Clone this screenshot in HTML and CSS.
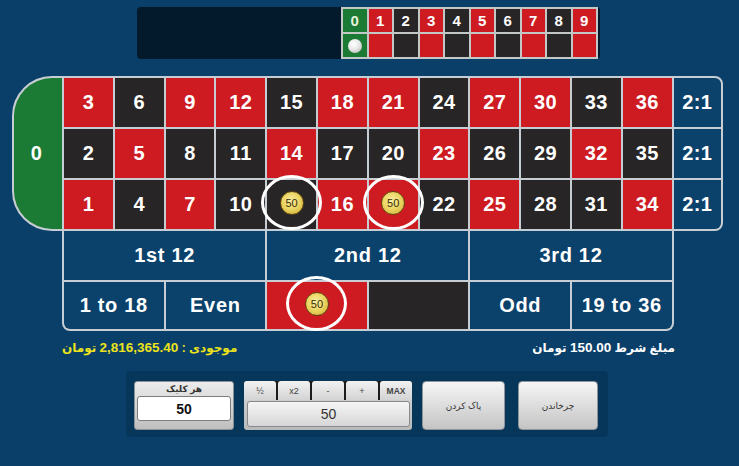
FILE: index.html
```html
<!DOCTYPE html>
<html lang="fa">
<head>
<meta charset="utf-8">
<title>Roulette</title>
<link rel="stylesheet" href="styles.css">
</head>
<body>
<div class="page">
  <div class="history">
    <div class="hist-grid">
      <div class="h green">0</div><div class="h red">1</div><div class="h black">2</div><div class="h red">3</div><div class="h black">4</div><div class="h red">5</div><div class="h black">6</div><div class="h red">7</div><div class="h black">8</div><div class="h red">9</div>
      <div class="h green"><span class="ball"></span></div><div class="h red"></div><div class="h black"></div><div class="h red"></div><div class="h black"></div><div class="h red"></div><div class="h black"></div><div class="h red"></div><div class="h black"></div><div class="h red"></div>
    </div>
  </div>

  <div class="table">
    <div class="inside">
      <div class="cell zero">0</div>
      <div class="cell red">3</div><div class="cell black">6</div><div class="cell red">9</div><div class="cell red">12</div><div class="cell black">15</div><div class="cell red">18</div><div class="cell red">21</div><div class="cell black">24</div><div class="cell red">27</div><div class="cell red">30</div><div class="cell black">33</div><div class="cell red">36</div><div class="cell col col-top">2:1</div>
      <div class="cell black">2</div><div class="cell red">5</div><div class="cell black">8</div><div class="cell black">11</div><div class="cell red">14</div><div class="cell black">17</div><div class="cell black">20</div><div class="cell red">23</div><div class="cell black">26</div><div class="cell black">29</div><div class="cell red">32</div><div class="cell black">35</div><div class="cell col">2:1</div>
      <div class="cell red">1</div><div class="cell black">4</div><div class="cell red">7</div><div class="cell black">10</div><div class="cell black has-chip"><span class="chip">50</span><span class="ring"></span></div><div class="cell red">16</div><div class="cell red has-chip"><span class="chip">50</span><span class="ring"></span></div><div class="cell black">22</div><div class="cell red">25</div><div class="cell black">28</div><div class="cell black">31</div><div class="cell red">34</div><div class="cell col col-bottom">2:1</div>
    </div>
    <div class="outside">
      <div class="cell out dozen">1st 12</div>
      <div class="cell out dozen">2nd 12</div>
      <div class="cell out dozen">3rd 12</div>
      <div class="cell out out-bl">1 to 18</div>
      <div class="cell out">Even</div>
      <div class="cell red has-chip"><span class="chip">50</span><span class="ring"></span></div>
      <div class="cell black"></div>
      <div class="cell out">Odd</div>
      <div class="cell out out-br">19 to 36</div>
    </div>
  </div>

  <div class="info">
    <span class="balance" dir="rtl">موجودی : <span class="num">2,816,365.40</span> تومان</span>
    <span class="bet" dir="rtl">مبلغ شرط <span class="num">150.00</span> تومان</span>
  </div>

  <div class="controls">
    <div class="per-click">
      <div class="pc-label">هر کلیک</div>
      <div class="pc-input">50</div>
    </div>
    <div class="amount">
      <div class="tabs">
        <div class="tab">½</div>
        <div class="tab">x2</div>
        <div class="tab">-</div>
        <div class="tab">+</div>
        <div class="tab tab-max">MAX</div>
      </div>
      <div class="amount-box">50</div>
    </div>
    <div class="btn btn-clear">پاک کردن</div>
    <div class="btn btn-spin">چرخاندن</div>
  </div>
</div>
</body>
</html>
```

FILE: styles.css
```css
html, body {
  margin: 0;
  padding: 0;
}
body {
  background: #0a3f69;
  font-family: "Liberation Sans", "DejaVu Sans", Arial, sans-serif;
  width: 739px;
  height: 466px;
  overflow: hidden;
}
.page {
  display: flex;
  flex-direction: column;
}

/* history */
.history {
  margin: 7px 0 0 137px;
  width: 463px;
  height: 52px;
  background: #031a2c;
  border-radius: 4px;
  display: flex;
  justify-content: flex-end;
}
.hist-grid {
  margin-right: 2px;
  display: grid;
  grid-template-columns: repeat(10, 23.5px);
  grid-template-rows: 23px 23px;
  gap: 2px;
  padding: 2px;
  background: #c3c8c6;
}
.h {
  display: flex;
  align-items: center;
  justify-content: center;
  color: #fff;
  font-weight: bold;
  font-size: 15px;
}
.h.green { color: #e4f2dc; }
.ball {
  width: 14px;
  height: 14px;
  border-radius: 50%;
  background: radial-gradient(circle at 40% 35%, #ffffff 0%, #e8e8e8 45%, #a9a9a9 100%);
}

.red { background: #cd1b21; }
.black { background: #272525; }
.green { background: #1b7a33; }

/* table */
.table {
  margin-top: 17px;
  display: flex;
  flex-direction: column;
}
.inside {
  margin-left: 12px;
  align-self: flex-start;
  display: grid;
  grid-template-columns: 48px repeat(12, 48.8px) 47.4px;
  grid-template-rows: repeat(3, 49px);
  gap: 2px;
  background: #c6cdd3;
  border: 2px solid #c6cdd3;
  border-radius: 40px 8px 8px 40px;
}
.cell {
  display: flex;
  align-items: center;
  justify-content: center;
  color: #fff;
  font-weight: bold;
  font-size: 20px;
  letter-spacing: 0.4px;
}
.zero {
  grid-row: 1 / span 3;
  background: #1b7a33;
  border-radius: 38px 0 0 38px;
  padding-right: 3px;
}
.col {
  background: #0b426c;
}
.col-top { border-top-right-radius: 6px; }
.col-bottom { border-bottom-right-radius: 6px; }

.outside {
  margin-left: 62px;
  align-self: flex-start;
  display: grid;
  grid-template-columns: repeat(6, 99.6px);
  grid-template-rows: 49px 47px;
  gap: 2px;
  background: #c6cdd3;
  border: 2px solid #c6cdd3;
  border-top: 0;
  border-radius: 0 0 8px 8px;
}
.out {
  background: #0b426c;
  font-size: 20px;
  letter-spacing: 0.7px;
}
.dozen { grid-column: span 2; }
.out-bl { border-bottom-left-radius: 6px; }
.out-br { border-bottom-right-radius: 6px; }

/* chips */
.has-chip { position: relative; }
.chip {
  position: absolute;
  left: 50%;
  top: calc(50% - 2px);
  width: 24px;
  height: 24px;
  margin-left: -12px;
  margin-top: -12px;
  box-sizing: border-box;
  border-radius: 50%;
  border: 1.5px solid #5f4610;
  background: radial-gradient(circle at 45% 40%, #f8eea4 0%, #ead35f 50%, #c9a632 100%);
  color: #3b2e06;
  font-size: 11px;
  font-weight: normal;
  letter-spacing: 0;
  display: flex;
  align-items: center;
  justify-content: center;
}
.ring {
  position: absolute;
  left: 50%;
  top: calc(50% - 2px);
  width: 61px;
  height: 55px;
  margin-left: -30.5px;
  margin-top: -27.5px;
  box-sizing: border-box;
  border: 3px solid #ffffff;
  border-radius: 50%;
}

/* info */
.info {
  margin: 6px 64px 0 62px;
  height: 20px;
  display: flex;
  justify-content: space-between;
  align-items: center;
  font-weight: bold;
  font-size: 12px;
}
.num {
  font-size: 13.5px;
}
.balance { color: #ece31c; }
.bet { color: #ffffff; }

/* controls */
.controls {
  margin: 14px 0 0 126px;
  width: 482px;
  height: 66px;
  box-sizing: border-box;
  padding: 10px 0 0 8px;
  background: #07365b;
  border-radius: 4px;
  display: flex;
  align-items: flex-start;
}
.per-click {
  width: 100px;
  height: 49px;
  box-sizing: border-box;
  margin-right: 10px;
  border-radius: 3px;
  background: linear-gradient(#ececec, #bfbfbf);
  border: 1px solid #8c9196;
  display: flex;
  flex-direction: column;
  align-items: center;
  padding: 0 2px;
}
.pc-label {
  font-size: 9px;
  font-weight: bold;
  color: #333;
  height: 14px;
  line-height: 14px;
}
.pc-input {
  width: 94px;
  height: 25px;
  box-sizing: border-box;
  background: #fff;
  border: 1px solid #7d7d7d;
  border-radius: 3px;
  display: flex;
  align-items: center;
  justify-content: center;
  font-weight: bold;
  font-size: 14px;
  color: #111;
}
.amount {
  width: 168px;
  height: 49px;
  margin-right: 10px;
  display: flex;
  flex-direction: column;
  background: linear-gradient(#dcdcdc, #b9b9b9);
  border-radius: 3px;
}
.tabs {
  display: flex;
  height: 19px;
  background: #1b1b1b;
  border-radius: 3px 3px 0 0;
  gap: 2px;
}
.tab {
  flex: 1;
  background: linear-gradient(#f2f2f2, #d3d3d3);
  border-radius: 3px 3px 0 0;
  display: flex;
  align-items: center;
  justify-content: center;
  font-size: 9px;
  color: #444;
}
.tab-max {
  font-weight: bold;
  font-size: 8.5px;
}
.amount-box {
  margin: 1px 2px 0 3px;
  height: 26px;
  box-sizing: border-box;
  border: 1px solid #8a8a8a;
  border-radius: 3px;
  background: linear-gradient(#f6f6f6, #d6d6d6);
  display: flex;
  align-items: center;
  justify-content: center;
  font-size: 14px;
  color: #333;
}
.btn {
  height: 49px;
  box-sizing: border-box;
  border-radius: 4px;
  border: 1px solid #8e949a;
  background: linear-gradient(#f6f6f6, #c4c4c4);
  display: flex;
  align-items: center;
  justify-content: center;
  font-size: 9px;
  color: #333;
}
.btn-clear {
  width: 83px;
  margin-right: 13px;
}
.btn-spin {
  width: 80px;
}
```
